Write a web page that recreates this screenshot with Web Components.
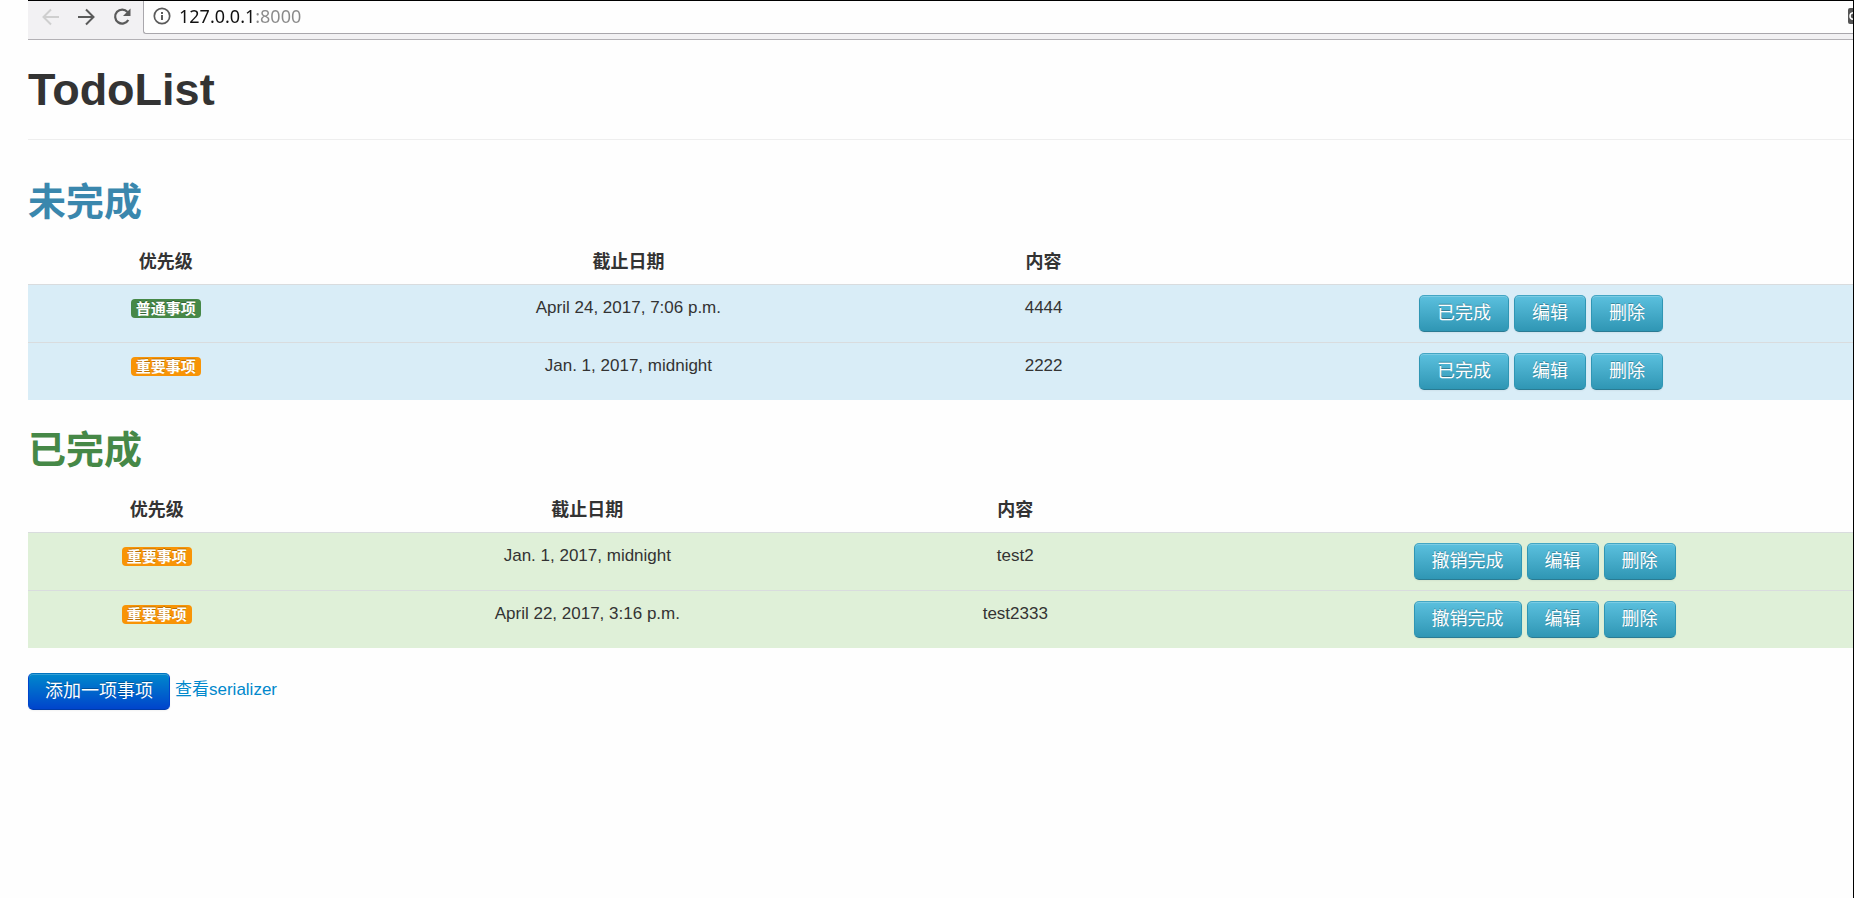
<!DOCTYPE html>
<html lang="zh-CN">
<head>
<meta charset="utf-8">
<title>TodoList</title>
<style>
html { background: #fefefe; }
body { margin: 0; font: 17px/25px "Liberation Sans", "Noto Sans CJK SC", sans-serif; color: #333; }
</style>
</head>
<body>
<todo-app>
  <browser-bar slot="bar"></browser-bar>
  <todo-section tone="info" heading="未完成" done-label="已完成">
    <todo-item level="normal" due="April 24, 2017, 7:06 p.m." text="4444"></todo-item>
    <todo-item level="important" due="Jan. 1, 2017, midnight" text="2222"></todo-item>
  </todo-section>
  <todo-section tone="success" heading="已完成" done-label="撤销完成">
    <todo-item level="important" due="Jan. 1, 2017, midnight" text="test2"></todo-item>
    <todo-item level="important" due="April 22, 2017, 3:16 p.m." text="test2333"></todo-item>
  </todo-section>
  <action-button slot="actions" kind="primary">添加一项事项</action-button>
  <text-link slot="actions" to="#serializer">查看serializer</text-link>
</todo-app>

<script>
class Base extends HTMLElement {
  connectedCallback() {
    if (this.shadowRoot) return;
    this.attachShadow({ mode: 'open' }).innerHTML = this.view();
  }
}

customElements.define('browser-bar', class extends Base {
  view() {
    return `<style>
      :host { display: flex; box-sizing: border-box; height: 40px; border-top: 1px solid #000; border-bottom: 1px solid #b3b1b5; background: #f2f1f3; }
      nav { display: flex; align-items: center; padding: 0 10px 6px 13px; gap: 16px; }
      nav button { display: block; border: 0; padding: 0; width: 20px; height: 20px; background: none; color: #5a5a5a; }
      nav button:disabled { color: #cfcfcf; }
      svg { display: block; flex: none; }
      .field { flex: 1; min-width: 0; display: flex; align-items: center; height: 33px; box-sizing: border-box; padding: 0 0 2px 8px; gap: 7px; background: #fefefe; border-left: 1px solid #a9a7ac; border-bottom: 1px solid #a9a7ac; border-bottom-left-radius: 3px; }
      input { flex: 1; min-width: 0; border: 0; padding: 0; outline: 0; font: 18px/24px "Noto Sans", sans-serif; color: transparent; background: linear-gradient(90deg, #111 76px, #8a8a8a 76px); -webkit-background-clip: text; background-clip: text; }
    </style>
    <nav>
      <button disabled aria-label="Back"><svg width="20" height="20" viewBox="0 0 20 20" fill="none" stroke="currentColor" stroke-width="2"><path d="M18 10H3M10 2.500L2.500 10L10 17.500"/></svg></button>
      <button aria-label="Forward"><svg width="20" height="20" viewBox="0 0 20 20" fill="none" stroke="currentColor" stroke-width="2"><path d="M1 10H16M9 2.500L16.500 10L9 17.500"/></svg></button>
      <button aria-label="Reload"><svg width="20" height="20" viewBox="0 0 20 20"><path d="M15.300 13A7 7 0 1 1 14.500 5" fill="none" stroke="currentColor" stroke-width="2.200"/><path d="M17.500 1.500V9H10Z" fill="currentColor"/></svg></button>
    </nav>
    <div class="field">
      <svg width="20" height="20" viewBox="0 0 20 20"><circle cx="10" cy="10" r="7.700" fill="none" stroke="#5a5a5a" stroke-width="1.700"/><path d="M9 9h2v5H9zM9 6h2v2H9z" fill="#5a5a5a"/></svg>
      <input type="text" value="127.0.0.1:8000" aria-label="Address">
      <svg width="5" height="16" viewBox="0 0 5 16"><path d="M2 0H5V16H2Q0 16 0 14V2Q0 0 2 0Z" fill="#555"/><path d="M5 4.700Q2 5 2 8T5 11.300" fill="none" stroke="#fff" stroke-width="1.500"/></svg>
    </div>`;
  }
});

customElements.define('action-button', class extends Base {
  view() {
    return `<style>
      :host { display: inline-block; vertical-align: middle; }
      button { display: block; margin: 0; padding: 5px 17px 6px; border: 1px solid #2f96b4; border-color: #43a6c4 #2f96b4 #2a7b93; border-radius: 5px; font: inherit; font-size: 18px; line-height: 24px; color: #fff; text-shadow: 0 -1px 0 rgba(0,0,0,.25); background: linear-gradient(#5bc0de, #2f96b4); box-shadow: inset 0 1px 0 rgba(255,255,255,.2), 0 1px 2px rgba(0,0,0,.05); cursor: pointer; }
      :host([kind=primary]) button { padding: 5px 16px 6px; border-color: #0074c0 #0044cc #003ba8; background: linear-gradient(#0088cc, #0044cc); }
    </style><button type="button"><slot></slot></button>`;
  }
});

customElements.define('text-link', class extends Base {
  view() {
    return `<style>:host { display: inline-block; } a { color: #0088cc; text-decoration: none; }</style>
    <a href="${this.getAttribute('to')}"><slot></slot></a>`;
  }
});

customElements.define('priority-label', class extends Base {
  view() {
    return `<style>
      :host { display: inline-block; padding: 0 5px; border-radius: 4px; background: #468847; color: #fff; font-size: 15px; font-weight: bold; line-height: 19px; text-shadow: 0 -1px 0 rgba(0,0,0,.25); }
      :host([level=important]) { background: #f89406; }
    </style><slot></slot>`;
  }
});

customElements.define('todo-section', class extends Base {
  view() {
    const rows = [...this.querySelectorAll('todo-item')].map(item => {
      const level = item.getAttribute('level');
      return `<tr>
        <td><priority-label level="${level}">${level === 'important' ? '重要事项' : '普通事项'}</priority-label></td>
        <td>${item.getAttribute('due')}</td>
        <td>${item.getAttribute('text')}</td>
        <td><div class="tools"><action-button>${this.getAttribute('done-label')}</action-button><action-button>编辑</action-button><action-button>删除</action-button></div></td>
      </tr>`;
    }).join('');
    return `<style>
      :host { display: block; --ink: #3a87ad; --fill: #d9edf7; --c1: 15.1%; --c2: 35.6%; --c3: 9.9%; }
      :host([tone=success]) { --ink: #468847; --fill: #dff0d8; --c1: 14.1%; --c2: 33.1%; --c3: 13.8%; }
      h2 { margin: 0; padding: 12px 0; font-size: 38px; line-height: 50px; color: var(--ink); }
      table { width: 100%; table-layout: fixed; border-collapse: separate; border-spacing: 0; text-align: center; margin-bottom: 13px; }
      th, td { box-sizing: border-box; padding: 10px; vertical-align: top; }
      th { padding: 11px 10px 9px; font-size: 18px; }
      th:nth-child(1) { width: var(--c1); } th:nth-child(2) { width: var(--c2); } th:nth-child(3) { width: var(--c3); }
      td { height: 58px; border-top: 1px solid #d9dcde; background: var(--fill); }
      td:last-child { padding-left: 105px; }
      .tools { display: flex; justify-content: center; gap: 5px; }
      priority-label { margin-top: 4px; vertical-align: top; }
    </style>
    <h2>${this.getAttribute('heading')}</h2>
    <table>
      <thead><tr><th scope="col">优先级</th><th scope="col">截止日期</th><th scope="col">内容</th><th></th></tr></thead>
      <tbody>${rows}</tbody>
    </table>`;
  }
});

customElements.define('todo-app', class extends Base {
  view() {
    return `<style>
      :host { display: block; box-sizing: border-box; min-height: 100vh; padding-left: 28px; border-right: 1px solid #000; }
      h1 { margin: 0 0 25px; padding: 25px 0 24px; border-bottom: 1px solid #eee; font-size: 45px; line-height: 50px; }
      footer { display: flex; gap: 5px; padding: 12px 0 25px; }
      footer ::slotted(text-link) { padding-top: 4px; }
    </style>
    <slot name="bar"></slot>
    <h1>TodoList</h1>
    <main><slot></slot></main>
    <footer><slot name="actions"></slot></footer>`;
  }
});
</script>
</body>
</html>
